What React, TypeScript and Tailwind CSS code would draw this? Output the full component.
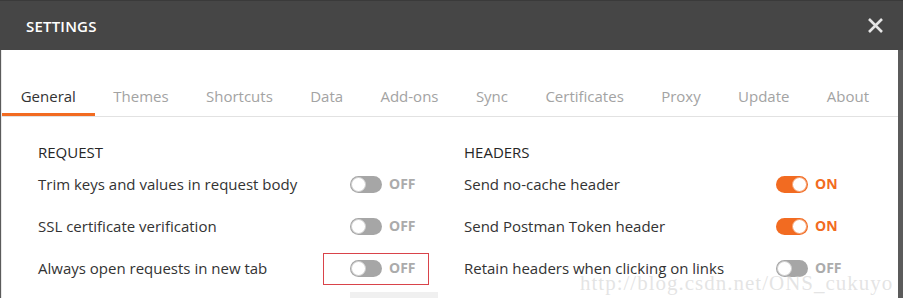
import React from "react";

const tabs = ["General", "Themes", "Shortcuts", "Data", "Add-ons", "Sync", "Certificates", "Proxy", "Update", "About"];

function Toggle({ on }: { on: boolean }) {
  return (
    <div className="flex items-center gap-[7px]">
      {on ? (
        <div className="w-[32px] h-[17px] rounded-full bg-[#f26b21] flex items-center justify-end pr-[1px]">
          <div className="w-[15px] h-[15px] rounded-full bg-white border border-[#f5a070]" />
        </div>
      ) : (
        <div className="w-[32px] h-[17px] rounded-full bg-[#a6a6a6] flex items-center pl-[1px]">
          <div className="w-[15px] h-[15px] rounded-full bg-white border border-[#d0d0d0]" />
        </div>
      )}
      <span
        className={
          "text-[14px] font-bold leading-none " + (on ? "text-[#f26b21]" : "text-[#ababab]")
        }
      >
        {on ? "ON" : "OFF"}
      </span>
    </div>
  );
}

function Row({ label, on, boxed }: { label: string; on: boolean; boxed?: boolean }) {
  return (
    <div className="h-[42px] flex items-center relative">
      <span className="w-[312px] text-[15px] text-[#333333]">{label}</span>
      <Toggle on={on} />
      {boxed && (
        <div className="absolute left-[285px] top-[6px] w-[106px] h-[32px] border border-[#d9434a]" />
      )}
    </div>
  );
}

export default function App() {
  return (
    <div
      className="w-[903px] h-[298px] bg-[#5b5b5b] relative overflow-hidden"
      style={{ fontFamily: '"Open Sans", "Noto Sans", sans-serif' }}
    >
      <div className="h-[50px] bg-[#464646] border-t border-[#3a3a3a] flex items-center justify-between pl-[26px] pr-[18px]">
        <span className="text-white text-[15px] font-semibold tracking-[0.2px] pt-[1px]">SETTINGS</span>
        <svg width="17" height="17" viewBox="0 0 17 17" className="mr-[1px]">
          <path d="M2 2 L15 15 M15 2 L2 15" stroke="#e6e6e6" strokeWidth="2.6" strokeLinecap="butt" />
        </svg>
      </div>
      <div className="ml-[1px] w-[897px] h-[248px] bg-white border-l border-[#e8e8e8]">
        <div className="pt-[28px] flex border-b border-[#e2e2e2]">
          {tabs.map((t, i) => (
            <div
              key={t}
              className={
                "px-[18.7px] pt-[7px] pb-[6px] leading-[22px] text-[15px] border-b-[3px] " +
                (i === 0 ? "text-[#333333] border-[#f26b21]" : "text-[#a3a3a3] border-transparent")
              }
            >
              {t}
            </div>
          ))}
        </div>
        <div className="flex pl-[36px] pt-[25px]">
          <div className="w-[426px]">
            <div className="h-[21px] leading-[21px] text-[15px] font-medium text-[#262626]">REQUEST</div>
            <Row label="Trim keys and values in request body" on={false} />
            <Row label="SSL certificate verification" on={false} />
            <Row label="Always open requests in new tab" on={false} boxed />
            <div className="ml-[312px] mt-[3px] w-[88px] h-[10px] bg-[#f0f0f0]" />
          </div>
          <div className="w-[426px]">
            <div className="h-[21px] leading-[21px] text-[15px] font-medium text-[#262626]">HEADERS</div>
            <Row label="Send no-cache header" on={true} />
            <Row label="Send Postman Token header" on={true} />
            <Row label="Retain headers when clicking on links" on={false} />
          </div>
        </div>
      </div>
      <div
        className="absolute left-[580px] top-[268px] text-[21px] tracking-[1px] text-[#d2d2d2]/60 whitespace-nowrap pointer-events-none"
        style={{ fontFamily: '"Liberation Serif", serif' }}
      >
        http://blog.csdn.net/ONS_cukuyo
      </div>
    </div>
  );
}
